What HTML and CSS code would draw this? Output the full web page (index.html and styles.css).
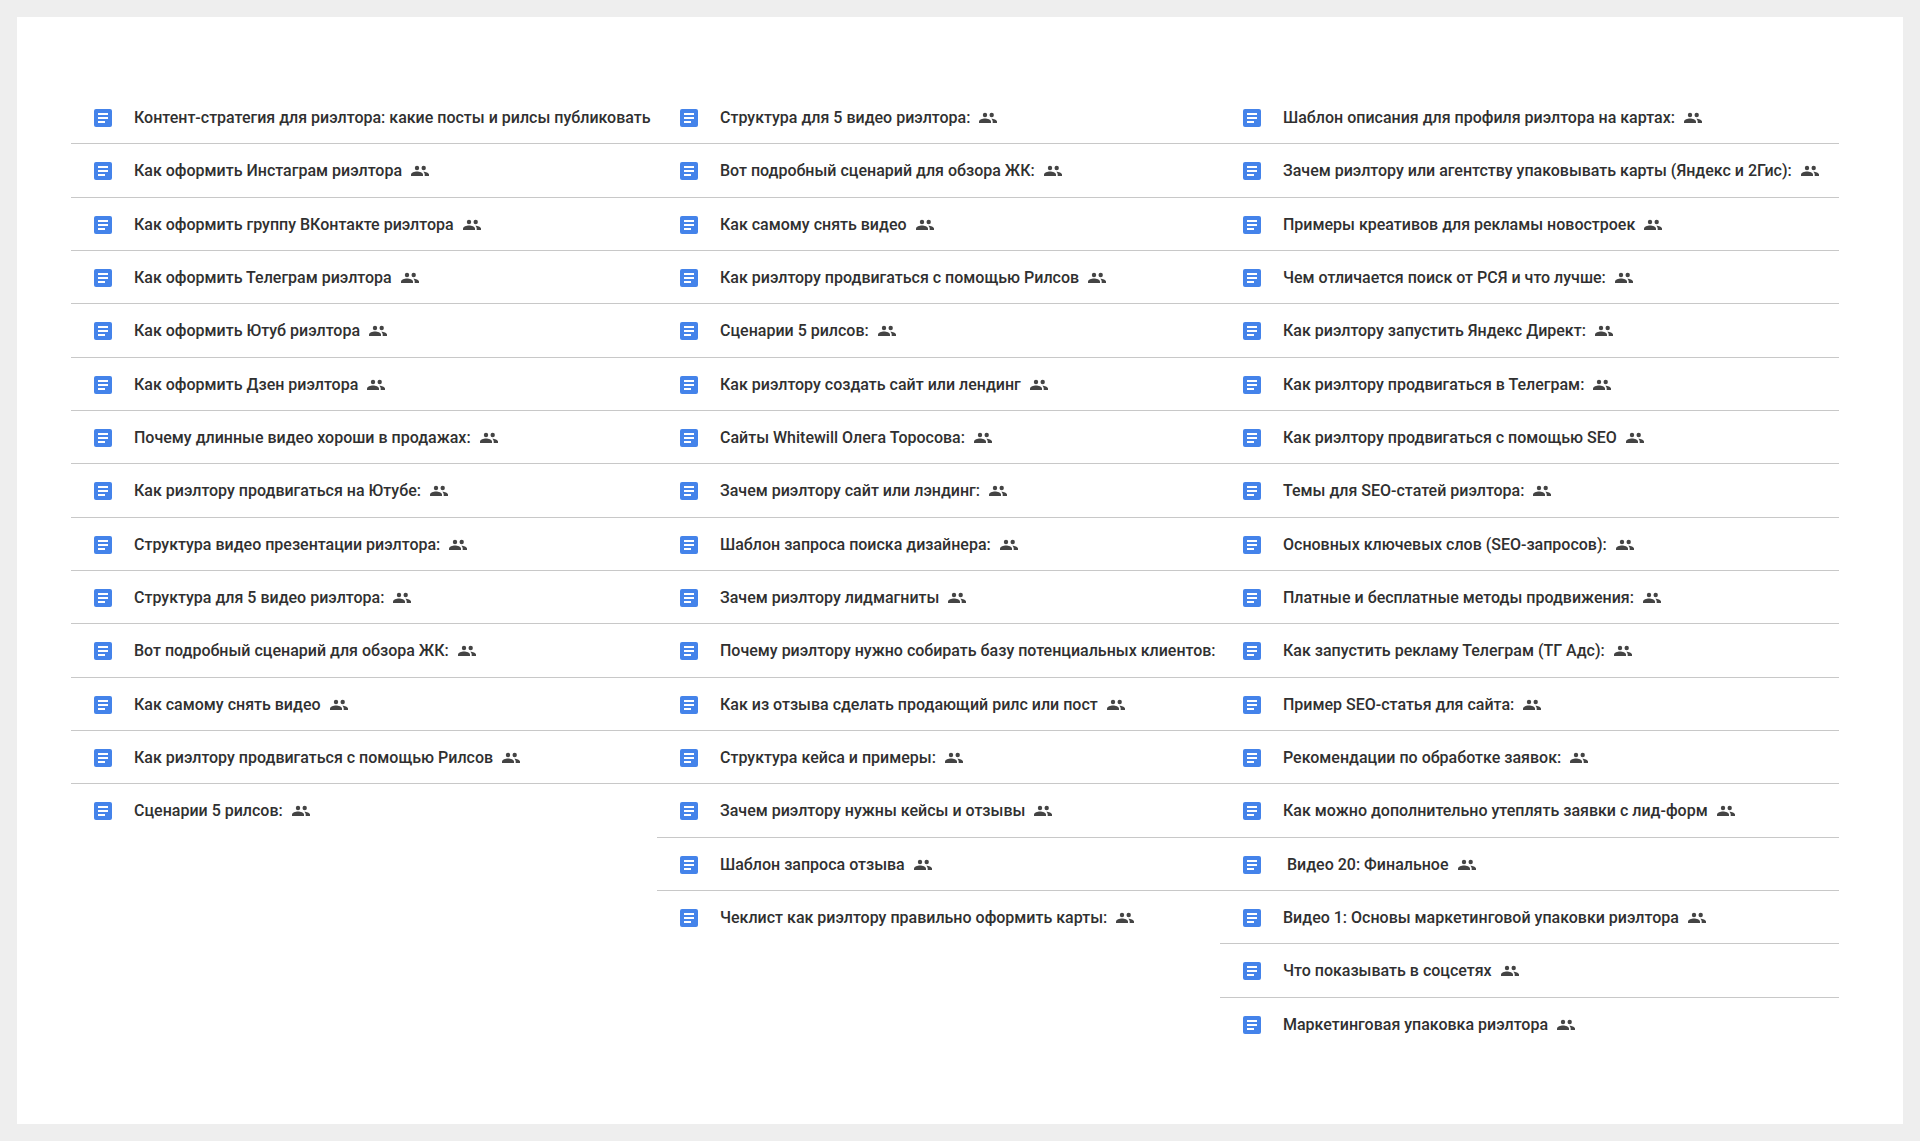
FILE: index.html
```html
<!DOCTYPE html>
<html lang="ru">
<head>
<meta charset="utf-8">
<meta name="viewport" content="width=device-width, initial-scale=1">
<title>Материалы для риэлтора</title>
<link rel="stylesheet" href="styles.css">
</head>
<body>
<svg class="sprite" aria-hidden="true">
  <symbol id="doc" viewBox="0 0 18 18">
    <rect width="18" height="18" rx="2" fill="#4483ea"/>
    <path d="M4 4h10v2H4zM4 8h10v2H4zM4 12h7v2H4z" fill="#fff"/>
  </symbol>
  <symbol id="people" viewBox="0 0 18 12">
    <circle cx="6" cy="3" r="2.2"/>
    <circle cx="12.7" cy="3" r="2.2"/>
    <path d="M0 11V9.600C0 7.600 3.500 6.500 6 6.500s6 1.100 6 3.100V11z"/>
    <path d="M12.300 6.700c2.500.1 5.700 1.100 5.700 2.900V11h-4.300V9.600c0-1.200-.6-2.200-1.400-2.900z"/>
  </symbol>
</svg>
<main class="panel">
  <ul class="list">
    <li class="row"><svg class="doc"><use href="#doc"/></svg><a class="name" href="#">Контент-стратегия для риэлтора: какие посты и рилсы публиковать</a></li>
    <li class="row"><svg class="doc"><use href="#doc"/></svg><a class="name" href="#">Как оформить Инстаграм риэлтора</a><svg class="people"><use href="#people"/></svg></li>
    <li class="row"><svg class="doc"><use href="#doc"/></svg><a class="name" href="#">Как оформить группу ВКонтакте риэлтора</a><svg class="people"><use href="#people"/></svg></li>
    <li class="row"><svg class="doc"><use href="#doc"/></svg><a class="name" href="#">Как оформить Телеграм риэлтора</a><svg class="people"><use href="#people"/></svg></li>
    <li class="row"><svg class="doc"><use href="#doc"/></svg><a class="name" href="#">Как оформить Ютуб риэлтора</a><svg class="people"><use href="#people"/></svg></li>
    <li class="row"><svg class="doc"><use href="#doc"/></svg><a class="name" href="#">Как оформить Дзен риэлтора</a><svg class="people"><use href="#people"/></svg></li>
    <li class="row"><svg class="doc"><use href="#doc"/></svg><a class="name" href="#">Почему длинные видео хороши в продажах:</a><svg class="people"><use href="#people"/></svg></li>
    <li class="row"><svg class="doc"><use href="#doc"/></svg><a class="name" href="#">Как риэлтору продвигаться на Ютубе:</a><svg class="people"><use href="#people"/></svg></li>
    <li class="row"><svg class="doc"><use href="#doc"/></svg><a class="name" href="#">Структура видео презентации риэлтора:</a><svg class="people"><use href="#people"/></svg></li>
    <li class="row"><svg class="doc"><use href="#doc"/></svg><a class="name" href="#">Структура для 5 видео риэлтора:</a><svg class="people"><use href="#people"/></svg></li>
    <li class="row"><svg class="doc"><use href="#doc"/></svg><a class="name" href="#">Вот подробный сценарий для обзора ЖК:</a><svg class="people"><use href="#people"/></svg></li>
    <li class="row"><svg class="doc"><use href="#doc"/></svg><a class="name" href="#">Как самому снять видео</a><svg class="people"><use href="#people"/></svg></li>
    <li class="row"><svg class="doc"><use href="#doc"/></svg><a class="name" href="#">Как риэлтору продвигаться с помощью Рилсов</a><svg class="people"><use href="#people"/></svg></li>
    <li class="row"><svg class="doc"><use href="#doc"/></svg><a class="name" href="#">Сценарии 5 рилсов:</a><svg class="people"><use href="#people"/></svg></li>
  </ul>
  <ul class="list">
    <li class="row"><svg class="doc"><use href="#doc"/></svg><a class="name" href="#">Структура для 5 видео риэлтора:</a><svg class="people"><use href="#people"/></svg></li>
    <li class="row"><svg class="doc"><use href="#doc"/></svg><a class="name" href="#">Вот подробный сценарий для обзора ЖК:</a><svg class="people"><use href="#people"/></svg></li>
    <li class="row"><svg class="doc"><use href="#doc"/></svg><a class="name" href="#">Как самому снять видео</a><svg class="people"><use href="#people"/></svg></li>
    <li class="row"><svg class="doc"><use href="#doc"/></svg><a class="name" href="#">Как риэлтору продвигаться с помощью Рилсов</a><svg class="people"><use href="#people"/></svg></li>
    <li class="row"><svg class="doc"><use href="#doc"/></svg><a class="name" href="#">Сценарии 5 рилсов:</a><svg class="people"><use href="#people"/></svg></li>
    <li class="row"><svg class="doc"><use href="#doc"/></svg><a class="name" href="#">Как риэлтору создать сайт или лендинг</a><svg class="people"><use href="#people"/></svg></li>
    <li class="row"><svg class="doc"><use href="#doc"/></svg><a class="name" href="#">Сайты Whitewill Олега Торосова:</a><svg class="people"><use href="#people"/></svg></li>
    <li class="row"><svg class="doc"><use href="#doc"/></svg><a class="name" href="#">Зачем риэлтору сайт или лэндинг:</a><svg class="people"><use href="#people"/></svg></li>
    <li class="row"><svg class="doc"><use href="#doc"/></svg><a class="name" href="#">Шаблон запроса поиска дизайнера:</a><svg class="people"><use href="#people"/></svg></li>
    <li class="row"><svg class="doc"><use href="#doc"/></svg><a class="name" href="#">Зачем риэлтору лидмагниты</a><svg class="people"><use href="#people"/></svg></li>
    <li class="row"><svg class="doc"><use href="#doc"/></svg><a class="name" href="#">Почему риэлтору нужно собирать базу потенциальных клиентов:</a></li>
    <li class="row"><svg class="doc"><use href="#doc"/></svg><a class="name" href="#">Как из отзыва сделать продающий рилс или пост</a><svg class="people"><use href="#people"/></svg></li>
    <li class="row"><svg class="doc"><use href="#doc"/></svg><a class="name" href="#">Структура кейса и примеры:</a><svg class="people"><use href="#people"/></svg></li>
    <li class="row"><svg class="doc"><use href="#doc"/></svg><a class="name" href="#">Зачем риэлтору нужны кейсы и отзывы</a><svg class="people"><use href="#people"/></svg></li>
    <li class="row"><svg class="doc"><use href="#doc"/></svg><a class="name" href="#">Шаблон запроса отзыва</a><svg class="people"><use href="#people"/></svg></li>
    <li class="row"><svg class="doc"><use href="#doc"/></svg><a class="name" href="#">Чеклист как риэлтору правильно оформить карты:</a><svg class="people"><use href="#people"/></svg></li>
  </ul>
  <ul class="list">
    <li class="row"><svg class="doc"><use href="#doc"/></svg><a class="name" href="#">Шаблон описания для профиля риэлтора на картах:</a><svg class="people"><use href="#people"/></svg></li>
    <li class="row"><svg class="doc"><use href="#doc"/></svg><a class="name" href="#">Зачем риэлтору или агентству упаковывать карты (Яндекс и 2Гис):</a><svg class="people"><use href="#people"/></svg></li>
    <li class="row"><svg class="doc"><use href="#doc"/></svg><a class="name" href="#">Примеры креативов для рекламы новостроек</a><svg class="people"><use href="#people"/></svg></li>
    <li class="row"><svg class="doc"><use href="#doc"/></svg><a class="name" href="#">Чем отличается поиск от РСЯ и что лучше:</a><svg class="people"><use href="#people"/></svg></li>
    <li class="row"><svg class="doc"><use href="#doc"/></svg><a class="name" href="#">Как риэлтору запустить Яндекс Директ:</a><svg class="people"><use href="#people"/></svg></li>
    <li class="row"><svg class="doc"><use href="#doc"/></svg><a class="name" href="#">Как риэлтору продвигаться в Телеграм:</a><svg class="people"><use href="#people"/></svg></li>
    <li class="row"><svg class="doc"><use href="#doc"/></svg><a class="name" href="#">Как риэлтору продвигаться с помощью SEO</a><svg class="people"><use href="#people"/></svg></li>
    <li class="row"><svg class="doc"><use href="#doc"/></svg><a class="name" href="#">Темы для SEO-статей риэлтора:</a><svg class="people"><use href="#people"/></svg></li>
    <li class="row"><svg class="doc"><use href="#doc"/></svg><a class="name" href="#">Основных ключевых слов (SEO-запросов):</a><svg class="people"><use href="#people"/></svg></li>
    <li class="row"><svg class="doc"><use href="#doc"/></svg><a class="name" href="#">Платные и бесплатные методы продвижения:</a><svg class="people"><use href="#people"/></svg></li>
    <li class="row"><svg class="doc"><use href="#doc"/></svg><a class="name" href="#">Как запустить рекламу Телеграм (ТГ Адс):</a><svg class="people"><use href="#people"/></svg></li>
    <li class="row"><svg class="doc"><use href="#doc"/></svg><a class="name" href="#">Пример SEO-статья для сайта:</a><svg class="people"><use href="#people"/></svg></li>
    <li class="row"><svg class="doc"><use href="#doc"/></svg><a class="name" href="#">Рекомендации по обработке заявок:</a><svg class="people"><use href="#people"/></svg></li>
    <li class="row"><svg class="doc"><use href="#doc"/></svg><a class="name" href="#">Как можно дополнительно утеплять заявки с лид-форм</a><svg class="people"><use href="#people"/></svg></li>
    <li class="row"><svg class="doc"><use href="#doc"/></svg><a class="name" href="#">&nbsp;Видео 20: Финальное</a><svg class="people"><use href="#people"/></svg></li>
    <li class="row"><svg class="doc"><use href="#doc"/></svg><a class="name" href="#">Видео 1: Основы маркетинговой упаковки риэлтора</a><svg class="people"><use href="#people"/></svg></li>
    <li class="row"><svg class="doc"><use href="#doc"/></svg><a class="name" href="#">Что показывать в соцсетях</a><svg class="people"><use href="#people"/></svg></li>
    <li class="row"><svg class="doc"><use href="#doc"/></svg><a class="name" href="#">Маркетинговая упаковка риэлтора</a><svg class="people"><use href="#people"/></svg></li>
  </ul>
</main>
</body>
</html>
```
FILE: styles.css
```css
* {
  box-sizing: border-box;
}

body {
  display: flex;
  min-height: 100vh;
  margin: 0;
  padding: 17px;
  background: #eee;
  color: #303030;
  font: 500 16px/20px Roboto, "Liberation Sans", sans-serif;
}

.sprite {
  position: absolute;
  width: 0;
  height: 0;
}

.panel {
  flex: 1;
  display: grid;
  grid-template-columns: 586fr 563fr 619fr;
  align-items: start;
  padding: 74px 64px 64px 54px;
  background: #fff;
}

.list {
  min-width: 0;
  margin: 0;
  padding: 0;
  list-style: none;
}

.row {
  display: flex;
  align-items: center;
  height: 53px;
  padding: 1px 0 0 23px;
  border-bottom: 1px solid #c8c8c8;
  white-space: nowrap;
}

/* Every third row is a pixel taller, keeping the average pitch at 53⅓px. */
.row:nth-child(3n + 2) {
  height: 54px;
}

.row:last-child {
  border-bottom-color: transparent;
}

.doc {
  flex: none;
  width: 18px;
  height: 18px;
  margin-right: 22px;
}

.name {
  color: inherit;
  text-decoration: none;
}

.people {
  flex: none;
  width: 18px;
  height: 12px;
  margin-left: 9px;
  fill: #444;
}
```
